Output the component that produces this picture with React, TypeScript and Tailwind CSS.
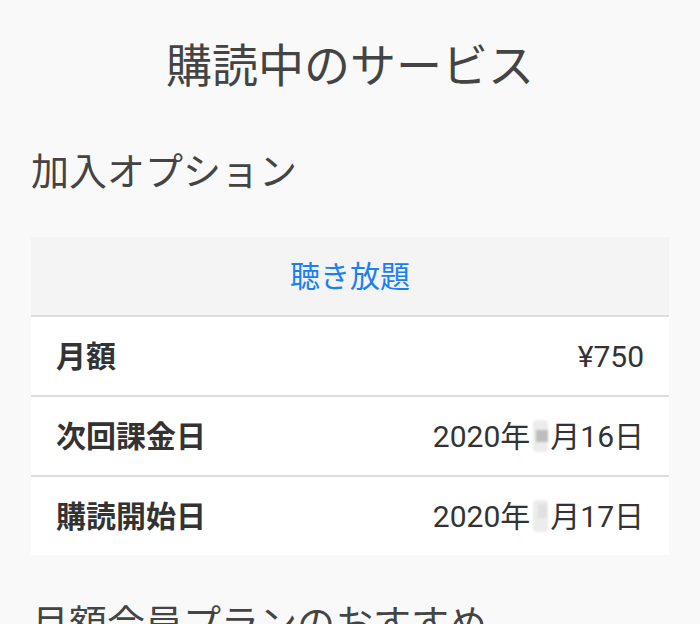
import React from 'react';

const FONT = "font-['Roboto','Noto_Sans_CJK_JP',sans-serif]";

// Blurred-out month digit as in the screenshot
const Redacted: React.FC<{ dark?: boolean }> = ({ dark }) => (
  <span className="inline-flex w-[18px] h-[32px] align-middle justify-center items-center mx-[1px]">
    <span className="relative w-[15px] h-[32px] bg-[#ececec] blur-[1px] rounded-sm">
      <span
        className={
          dark
            ? 'absolute left-[3px] top-[10px] w-[12px] h-[12px] bg-[#bdbdbd]'
            : 'absolute left-[5px] top-[4px] w-[9px] h-[14px] bg-[#e0e0e0]'
        }
      />
    </span>
  </span>
);

const rows: { label: string; value: React.ReactNode }[] = [
  { label: '月額', value: '¥750' },
  {
    label: '次回課金日',
    value: (
      <>
        2020年
        <Redacted dark />
        月16日
      </>
    ),
  },
  {
    label: '購読開始日',
    value: (
      <>
        2020年
        <Redacted />
        月17日
      </>
    ),
  },
];

const App: React.FC = () => {
  return (
    <div className={`w-[700px] h-[624px] overflow-hidden bg-[#f9f9f9] ${FONT}`}>
      {/* Page title */}
      <h1 className="pt-[34px] text-center text-[46px] leading-[64px] text-[#444] font-normal">
        購読中のサービス
      </h1>

      {/* Section heading */}
      <h2 className="mt-[47px] px-[31px] text-[38px] leading-[54px] text-[#444] font-normal">
        加入オプション
      </h2>

      {/* Subscription card */}
      <div className="mt-[38px] mx-[31px] bg-white">
        <div className="h-[78px] flex items-center justify-center bg-[#f4f4f4] border-b-2 border-[#dddddd] box-content">
          <span className="text-[30px] text-[#1a80f0]">聴き放題</span>
        </div>
        {rows.map((r, i) => (
          <div
            key={r.label}
            className={`h-[78px] flex items-center justify-between px-[25px] box-content ${
              i < rows.length - 1 ? 'border-b-2 border-[#dddddd]' : ''
            }`}
          >
            <span className="text-[30px] font-bold text-[#333]">{r.label}</span>
            <span className="text-[30px] text-[#333] flex items-center">{r.value}</span>
          </div>
        ))}
      </div>

      {/* Next section, cut off at the bottom */}
      <h2 className="mt-[42px] px-[31px] text-[38px] leading-[54px] text-[#444] font-normal">
        月額会員プランのおすすめ
      </h2>
    </div>
  );
};

export default App;
